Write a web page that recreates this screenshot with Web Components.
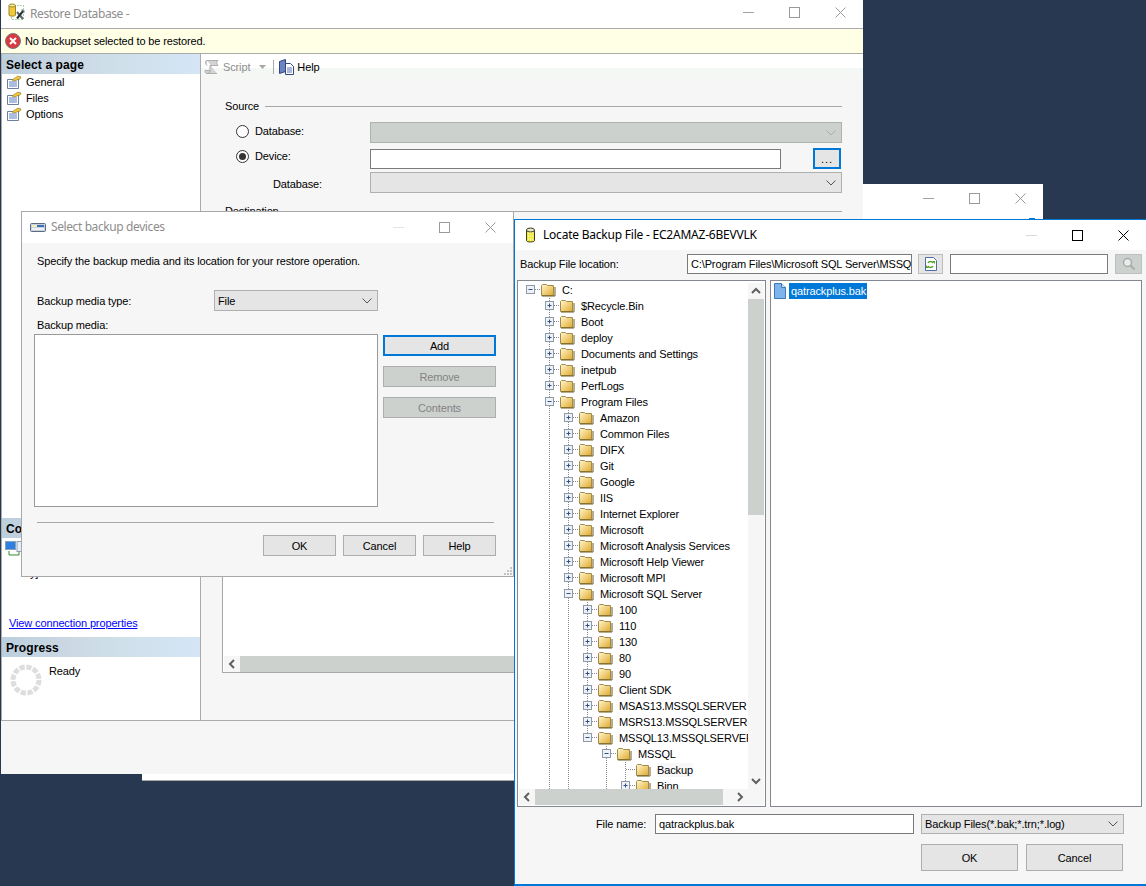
<!DOCTYPE html>
<html>
<head>
<meta charset="utf-8">
<title>Restore Database</title>
<style>
	html, body { margin: 0; height: 100%; overflow: hidden; }
	body { background: #283850; font: 11px "Liberation Sans", Arial, sans-serif; letter-spacing: -0.13px; color: #000; }
	#main { left: 1px; top: 0; width: 862px; height: 774px; }
	#back { left: 142px; top: 184px; width: 901px; height: 597px; }
	#select { left: 21px; top: 211px; width: 493px; height: 366px; }
	#locate { left: 514px; top: 219px; width: 632px; height: 667px; }
</style>
</head>
<body>
<win-frame id="back" caption="" tone="dim" cap="28" variant="plain"><back-tick></back-tick></win-frame>

<win-frame id="main" caption="Restore Database -" tone="dim" cap="24" variant="none">
	<svg slot="icon" width="20" height="20" viewBox="0 0 20 20">
		<rect x="3.500" y="3.500" width="12" height="14" fill="none" stroke="#63a84e" stroke-dasharray="1 2"/>
		<path d="M1 3.500h6.500v9.500c0 1.500-6.500 1.500-6.500 0z" fill="#f0c93a" stroke="#9a8426"/>
		<ellipse cx="4.200" cy="3.500" rx="3.200" ry="1.500" fill="#f8ea9a" stroke="#9a8426"/>
		<path d="M9 10l6 7" stroke="#5c666e" stroke-width="2"/>
		<path d="M15.500 8.500l-6.500 8" stroke="#2c3238" stroke-width="2"/>
		<path d="M13 8h3v3" fill="none" stroke="#8b959c"/>
	</svg>
	<restore-page></restore-page>
</win-frame>

<win-frame id="select" caption="Select backup devices" tone="dim" cap="31" variant="bordered">
	<svg slot="icon" width="16" height="16" viewBox="0 0 16 16">
		<rect x="0.500" y="3.500" width="15" height="8" rx="1" fill="#c6d2e2" stroke="#5d6b80"/>
		<rect x="2" y="5" width="5" height="2" fill="#f4f1b8"/>
		<rect x="7" y="5" width="7" height="2" fill="#3f6fb0"/>
		<rect x="2" y="8" width="12" height="2" fill="#eef1f5"/>
	</svg>
	<select-devices></select-devices>
</win-frame>

<win-frame id="locate" caption="Locate Backup File - EC2AMAZ-6BEVVLK" tone="active" cap="30" variant="focused">
	<svg slot="icon" width="16" height="16" viewBox="0 0 16 16">
		<path d="M3.500 3v10.500c0 2 8 2 8 0V3z" fill="#f2ea3e" stroke="#3b3b22"/>
		<ellipse cx="7.500" cy="3" rx="4" ry="2" fill="#e8e6c0" stroke="#3b3b22"/>
		<path d="M5 6h6M5 9h6M5 12h6" stroke="#fff" stroke-dasharray="1 1"/>
	</svg>
	<locate-file></locate-file>
</win-frame>

<script>
const baseStyle = `
	* { box-sizing: border-box; }
	svg { display: block; flex: none; }
`;

class WinFrame extends HTMLElement {
	connectedCallback() {
		let shadow = this.attachShadow({mode: "open"});
		let cap = this.getAttribute("cap") || "30";
		let tone = this.getAttribute("tone");
		let variant = this.getAttribute("variant");
		let caption = this.getAttribute("caption");
		let capColor = tone == "active" ? "#000" : "#8d8d8d";
		let minColor = tone == "active" ? "#d8d8d8" : (this.id == "select" ? "#e4e4e4" : "#a0a0a0");
		let iconColor = tone == "active" ? "#000" : "#9a9a9a";
		let border = "border: 1px solid #a8a8a8;";
		if (variant == "plain") border = "border-bottom: 1px solid #a8a8a8;";
		if (variant == "none") border = "";
		if (variant == "focused") border = "border: solid #0078d7; border-width: 1px 0 2px 1px;";
		shadow.innerHTML = `
			<style>
				${baseStyle}
				:host {
					position: absolute;
					display: flex;
					flex-direction: column;
					box-sizing: border-box;
					background: #fff;
					overflow: hidden;
					${border}
				}
				header {
					display: flex;
					align-items: center;
					flex: none;
					height: ${cap}px;
					background: #fff;
					padding-left: ${variant == "bordered" || variant == "focused" ? 8 : 7}px;
				}
				h1 {
					margin: 0 0 0 ${variant == "none" ? 2 : variant == "focused" ? 4 : 5}px;
					padding: ${variant == "none" ? "2px 0 0" : "0 0 2px"};
					flex: 1;
					font: 12px "Noto Sans", "Open Sans", sans-serif;
					letter-spacing: ${tone == "active" ? -0.22 : -0.4}px;
					color: ${capColor};
					white-space: nowrap;
				}
				.ctl {
					width: 46px;
					height: ${cap}px;
					display: flex;
					align-items: center;
					justify-content: center;
				}
				.body { flex: 1; display: flex; flex-direction: column; min-height: 0; position: relative; }
			</style>
			<header>
				<slot name="icon"></slot>
				<h1>${caption}</h1>
				<div class="ctl"><svg width="11" height="11" viewBox="0 0 11 11"><path d="M0 5.500h11" stroke="${minColor}"/></svg></div>
				<div class="ctl"><svg width="11" height="11" viewBox="0 0 11 11"><rect x="0.500" y="0.500" width="10" height="10" fill="none" stroke="${iconColor}"/></svg></div>
				<div class="ctl"><svg width="11" height="11" viewBox="0 0 11 11"><path d="M0.500 0.500l10 10M10.500 0.500l-10 10" stroke="${iconColor}" fill="none"/></svg></div>
			</header>
			<div class="body"><slot></slot></div>
		`;
	}
}
customElements.define("win-frame", WinFrame);

class BackTick extends HTMLElement {
	connectedCallback() {
		let shadow = this.attachShadow({mode: "open"});
		shadow.innerHTML = `
			<style>
				:host { position: absolute; right: 8px; top: 6px; width: 6px; height: 2px; background: #0078d7; display: block; }
			</style>
		`;
	}
}
customElements.define("back-tick", BackTick);

class WinBtn extends HTMLElement {
	connectedCallback() {
		let shadow = this.attachShadow({mode: "open"});
		let focus = this.hasAttribute("focus");
		let off = this.hasAttribute("disabled");
		shadow.innerHTML = `
			<style>
				${baseStyle}
				:host {
					display: flex;
					align-items: center;
					justify-content: center;
					flex: none;
					box-sizing: border-box;
					background: ${off ? "#cdd1ce" : "#e5e5e5"};
					color: ${off ? "#838383" : "#000"};
					border: ${focus ? "2px solid #0078d7" : "1px solid #adadad"};
				}
			</style>
			<slot></slot>
		`;
	}
}
customElements.define("win-btn", WinBtn);

class WinCombo extends HTMLElement {
	connectedCallback() {
		let shadow = this.attachShadow({mode: "open"});
		let off = this.hasAttribute("disabled");
		shadow.innerHTML = `
			<style>
				${baseStyle}
				:host {
					display: flex;
					align-items: center;
					box-sizing: border-box;
					background: ${off ? "#cdd1ce" : "#e5e5e5"};
					border: 1px solid #adb2af;
					padding: 0 5px 0 3px;
				}
				span { flex: 1; white-space: nowrap; }
			</style>
			<span><slot></slot></span>
			<svg width="10" height="6" viewBox="0 0 10 6"><path d="M0.500 0.500L5 5l4.500-4.500" fill="none" stroke="${off ? "#a9adaa" : "#555"}"/></svg>
		`;
	}
}
customElements.define("win-combo", WinCombo);

class WinInput extends HTMLElement {
	connectedCallback() {
		let shadow = this.attachShadow({mode: "open"});
		shadow.innerHTML = `
			<style>
				:host {
					display: flex;
					align-items: center;
					box-sizing: border-box;
					background: #fff;
					border: 1px solid #7a7a7a;
					padding: 0 2px 0 3px;
					overflow: hidden;
					white-space: nowrap;
				}
			</style>
			<slot></slot>
		`;
	}
}
customElements.define("win-input", WinInput);

class WinRadio extends HTMLElement {
	connectedCallback() {
		let shadow = this.attachShadow({mode: "open"});
		let on = this.hasAttribute("checked");
		shadow.innerHTML = `
			<style>
				${baseStyle}
				:host { display: flex; align-items: center; gap: 6px; }
			</style>
			<svg width="13" height="13" viewBox="0 0 13 13">
				<circle cx="6.500" cy="6.500" r="6" fill="#fff" stroke="#333"/>
				${on ? '<circle cx="6.500" cy="6.500" r="3.500" fill="#333"/>' : ""}
			</svg>
			<slot></slot>
		`;
	}
}
customElements.define("win-radio", WinRadio);

class SectionHead extends HTMLElement {
	connectedCallback() {
		let shadow = this.attachShadow({mode: "open"});
		shadow.innerHTML = `
			<style>
				:host {
					display: flex;
					align-items: center;
					flex: none;
					height: 20px;
					padding: 2px 0 0 4px;
					box-sizing: border-box;
					font-weight: bold;
					font-size: 12px;
					letter-spacing: 0.1px;
					background: linear-gradient(90deg, #bccfdd 0, #ccd8e4 35%, #cfe0ea 60%, #d5e5f5 100%);
				}
			</style>
			<slot></slot>
		`;
	}
}
customElements.define("section-head", SectionHead);

class GroupTitle extends HTMLElement {
	connectedCallback() {
		let shadow = this.attachShadow({mode: "open"});
		shadow.innerHTML = `
			<style>
				:host { display: flex; align-items: center; gap: 6px; height: 12px; }
				i { flex: 1; border-top: 1px solid #a8a8a8; }
			</style>
			<slot></slot><i></i>
		`;
	}
}
customElements.define("group-title", GroupTitle);

class ScrollBar extends HTMLElement {
	connectedCallback() {
		let shadow = this.attachShadow({mode: "open"});
		let vertical = this.getAttribute("orient") == "v";
		let size = this.getAttribute("thumb");
		let a = vertical ? "M1 7l4-4 4 4" : "M7 1L3 5l4 4";
		let b = vertical ? "M1 3l4 4 4-4" : "M3 1l4 4-4 4";
		shadow.innerHTML = `
			<style>
				${baseStyle}
				:host {
					display: flex;
					flex-direction: ${vertical ? "column" : "row"};
					flex: none;
					box-sizing: border-box;
					background: #f6f6f6;
					${vertical ? "width: 16px;" : "height: 16px;"}
				}
				.arrow { flex: none; width: 16px; height: 16px; display: flex; align-items: center; justify-content: center; }
				.thumb { flex: ${size ? "none" : 1}; background: #cdd1ce; ${vertical ? "height" : "width"}: ${size ? size + "px" : "auto"}; }
				.track { flex: 1; }
			</style>
			<div class="arrow"><svg width="10" height="10" viewBox="0 0 10 10"><path d="${a}" fill="none" stroke="#606060" stroke-width="2"/></svg></div>
			<div class="thumb"></div>
			${size ? '<div class="track"></div>' : ""}
			<div class="arrow"><svg width="10" height="10" viewBox="0 0 10 10"><path d="${b}" fill="none" stroke="#606060" stroke-width="2"/></svg></div>
		`;
	}
}
customElements.define("scroll-bar", ScrollBar);

const pageIcon = `<svg width="17" height="16" viewBox="0 0 17 16">
	<path d="M1.500 5.500h11v9h-11z" fill="#fff" stroke="#6b7f99"/>
	<path d="M3 8h8M3 10h8M3 12h8" stroke="#5a7ec0"/>
	<path d="M6 6l6-4 3 1-1 2-6 2z" fill="#f2c83a" stroke="#8a6d1a" stroke-width="0.600"/>
</svg>`;

class NavItem extends HTMLElement {
	connectedCallback() {
		let shadow = this.attachShadow({mode: "open"});
		shadow.innerHTML = `
			<style>
				${baseStyle}
				:host { display: flex; align-items: center; gap: 3px; height: 16px; padding-left: 4px; }
			</style>
			${pageIcon}
			<slot></slot>
		`;
	}
}
customElements.define("nav-item", NavItem);

class RestorePage extends HTMLElement {
	connectedCallback() {
		let shadow = this.attachShadow({mode: "open"});
		shadow.innerHTML = `
			<style>
				${baseStyle}
				:host { display: flex; flex-direction: column; flex: 1; min-height: 0; background: #fff; padding-top: 4px; height: 100%; }
				.msg {
					display: flex;
					align-items: center;
					gap: 4px;
					flex: none;
					height: 26px;
					padding-left: 4px;
					background: #ffffe6;
					border-top: 1px solid #ababab;
					border-bottom: 1px solid #ababab;
				}
				.split { flex: 1; display: grid; grid-template-columns: 199px 1fr; min-height: 0; border-left: 1px solid #ababab; }
				.side { display: flex; flex-direction: column; border-right: 1px solid #ababab; background: #fff; }
				.pages { display: flex; flex-direction: column; height: 464px; }
				.conn { display: flex; flex-direction: column; flex: none; height: 119px; }
				.conn-ico { padding: 3px 0 0 3px; height: 24px; }
				.conn-txt { padding: 5px 0 0 28px; height: 36px; }
				a { color: #0000ff; text-decoration: underline; padding: 19px 0 0 7px; }
				.prog { display: flex; gap: 7px; padding: 7px 0 0 8px; }
				.prog span { padding-top: 1px; }
				.main { display: flex; flex-direction: column; background: #f6f6f6; }
				.tools {
					display: flex;
					align-items: center;
					gap: 3px;
					height: 24px;
					padding: 2px 0 0 2px;
					flex: none;
					background: linear-gradient(#fff 0 14px, #f4f8f4 14px, #f6f6f6 34px);
				}
				.gray { color: #8d8d8d; }
				.dd { margin: 0 4px 0 6px; }
				.sep { width: 1px; height: 14px; background: #a9a9a9; margin-right: 1px; }
				.help { margin-left: -1px; }
				.form {
					flex: none;
					display: grid;
					grid-template-columns: 145px 1fr;
					row-gap: 5px;
					padding: 22px 21px 0 24px;
					background: #f6f6f6;
				}
				group-title { grid-column: 1 / 3; }
				.first { margin-bottom: 5px; }
				.radio { padding-left: 11px; align-self: start; }
				.sub { padding: 6px 0 0 48px; margin-top: -2px; }
				.device { display: flex; gap: 32px; padding-right: 1px; }
				.device win-input { flex: 1; height: 20px; margin: 1px 0 0; }
				.device win-btn { width: 28px; height: 21px; letter-spacing: 1px; }
				.box {
					flex: 1;
					display: flex;
					flex-direction: column;
					justify-content: flex-end;
					margin: 12px 21px 47px 21px;
					background: #fff;
					border: 1px solid #a8a8a8;
				}
				.box scroll-bar { margin-left: 1px; }
				.foot { height: 54px; flex: none; background: #f6f6f6; border-top: 1px solid #ababab; }
			</style>
			<div class="msg">
				<svg width="16" height="16" viewBox="0 0 16 16">
					<circle cx="8" cy="8" r="7.500" fill="#d93a42" stroke="#77777b"/>
					<path d="M5 5l6 6M11 5l-6 6" stroke="#fff" stroke-width="2"/>
				</svg>
				<span>No backupset selected to be restored.</span>
			</div>
			<div class="split">
				<div class="side">
					<div class="pages">
						<section-head>Select a page</section-head>
						<nav-item>General</nav-item>
						<nav-item>Files</nav-item>
						<nav-item>Options</nav-item>
					</div>
					<div class="conn">
						<section-head>Connection</section-head>
						<div class="conn-ico">
							<svg width="20" height="16" viewBox="0 0 20 16">
								<rect x="0.500" y="0.500" width="10" height="8" fill="#2f7fe0" stroke="#8aa0b8"/>
								<rect x="12" y="0.500" width="6" height="10" fill="#e6ecf4" stroke="#8aa0b8"/>
								<path d="M4 10v4h10v-3" fill="none" stroke="#2f8f2f"/>
							</svg>
						</div>
						<div class="conn-txt">y]</div>
						<a>View connection properties</a>
					</div>
					<section-head>Progress</section-head>
					<div class="prog">
						<svg width="32" height="32" viewBox="0 0 32 32"><circle cx="16" cy="16" r="13" fill="none" stroke="#dedede" stroke-width="5" stroke-dasharray="5.200 1.600"/></svg>
						<span>Ready</span>
					</div>
				</div>
				<div class="main">
					<div class="tools">
						<svg width="17" height="16" viewBox="0 0 17 16">
							<path d="M4 1.500h11c-2 2-1 3 0 5H7v5c0 2-1 3-3 3h10" fill="#d4d4d4" stroke="#adadad"/>
							<path d="M2 11.500h5c0 1.500-1 3-3 3s-2-2-2-3zM4 1.500c-2 0-2 3 0 5" fill="#d4d4d4" stroke="#adadad"/>
						</svg>
						<span class="gray">Script</span>
						<svg class="dd" width="7" height="4" viewBox="0 0 7 4"><path d="M0 0h7L3.500 4z" fill="#a8a8a8"/></svg>
						<div class="sep"></div>
						<svg width="17" height="17" viewBox="0 0 17 17">
							<path d="M1.500 2.500l6-2v12l-6 2z" fill="#6c83c4" stroke="#33447e"/>
							<path d="M7.500 4.500h5l3 3v8h-8z" fill="#fff" stroke="#33447e"/>
							<path d="M9 9h5M9 11h5M9 13h5" stroke="#5a6fb0"/>
						</svg>
						<span class="help">Help</span>
					</div>
					<div class="form">
						<group-title class="first">Source</group-title>
						<win-radio class="radio" style="height:18px">Database:</win-radio>
						<win-combo disabled style="height:21px"></win-combo>
						<win-radio class="radio" style="height:16px" checked>Device:</win-radio>
						<div class="device"><win-input></win-input><win-btn focus>...</win-btn></div>
						<div class="sub">Database:</div>
						<win-combo style="height:21px;margin-top:-2px"></win-combo>
					</div>
					<div class="form" style="padding-top:12px"><group-title>Destination</group-title></div>
					<div class="box"><scroll-bar orient="h"></scroll-bar></div>
				</div>
			</div>
			<div class="foot"></div>
		`;
	}
}
customElements.define("restore-page", RestorePage);

class SelectDevices extends HTMLElement {
	connectedCallback() {
		let shadow = this.attachShadow({mode: "open"});
		shadow.innerHTML = `
			<style>
				${baseStyle}
				:host { display: flex; flex-direction: column; flex: 1; height: 100%; background: #f6f6f6; position: relative; padding: 12px 17px 0 15px; }
				.type { display: grid; grid-template-columns: 177px 164px; align-items: center; margin-top: 23px; }
				.type win-combo { height: 21px; }
				.lbl { margin: 8px 0 1px; height: 14px; }
				.media { display: flex; gap: 5px; margin-left: -3px; }
				.list { width: 344px; height: 173px; background: #fff; border: 1px solid #9a9a9a; }
				.btns { display: flex; flex-direction: column; gap: 10px; padding-top: 1px; }
				.btns win-btn { width: 113px; height: 21px; }
				hr { margin: 15px 2px 0 0; border: 0; border-top: 1px solid #a8a8a8; }
				.foot { display: flex; justify-content: flex-end; gap: 7px; margin-top: 12px; }
				.foot win-btn { height: 21px; width: 73px; }
				.grip { position: absolute; right: 1px; bottom: 1px; }
			</style>
			<div>Specify the backup media and its location for your restore operation.</div>
			<div class="type"><span>Backup media type:</span><win-combo>File</win-combo></div>
			<div class="lbl">Backup media:</div>
			<div class="media">
				<div class="list"></div>
				<div class="btns">
					<win-btn focus>Add</win-btn>
					<win-btn disabled>Remove</win-btn>
					<win-btn disabled>Contents</win-btn>
				</div>
			</div>
			<hr>
			<div class="foot"><win-btn>OK</win-btn><win-btn>Cancel</win-btn><win-btn>Help</win-btn></div>
			<svg class="grip" width="9" height="9" viewBox="0 0 9 9"><path d="M7 1h2v2H7zM4 4h2v2H4zM7 4h2v2H7zM1 7h2v2H1zM4 7h2v2H4zM7 7h2v2H7z" fill="#c4c4c4"/></svg>
		`;
	}
}
customElements.define("select-devices", SelectDevices);

const treeRows = [
	[0, "C:", "-"], [1, "$Recycle.Bin", "+"], [1, "Boot", "+"], [1, "deploy", "+"],
	[1, "Documents and Settings", "+"], [1, "inetpub", "+"], [1, "PerfLogs", "+"], [1, "Program Files", "-"],
	[2, "Amazon", "+"], [2, "Common Files", "+"], [2, "DIFX", "+"], [2, "Git", "+"], [2, "Google", "+"],
	[2, "IIS", "+"], [2, "Internet Explorer", "+"], [2, "Microsoft", "+"], [2, "Microsoft Analysis Services", "+"],
	[2, "Microsoft Help Viewer", "+"], [2, "Microsoft MPI", "+"], [2, "Microsoft SQL Server", "-"],
	[3, "100", "+"], [3, "110", "+"], [3, "130", "+"], [3, "80", "+"], [3, "90", "+"], [3, "Client SDK", "+"],
	[3, "MSAS13.MSSQLSERVER", "+"], [3, "MSRS13.MSSQLSERVER", "+"], [3, "MSSQL13.MSSQLSERVER", "-"],
	[4, "MSSQL", "-"], [5, "Backup", ""], [5, "Binn", "+"]
];
// levels which carry on below the part of the tree that is on screen
const openLevels = [1, 2, 4];

function continues(i, level) {
	for (let j = i + 1; j < treeRows.length; j++) {
		if (treeRows[j][0] == level) return true;
		if (treeRows[j][0] < level) return false;
	}
	return openLevels.includes(level);
}

function treeCell(top, bottom, right, state) {
	let dots = 'stroke="#8a8a8a" stroke-dasharray="1 1" fill="none"';
	let s = `<svg width="19" height="16" viewBox="0 0 19 16">`;
	if (top) s += `<path d="M9.500 0v8" ${dots}/>`;
	if (bottom) s += `<path d="M9.500 8v8" ${dots}/>`;
	if (right) s += `<path d="M10 7.500h9" ${dots}/>`;
	if (state) {
		s += `<rect x="5.500" y="3.500" width="8" height="8" fill="#eef1f5" stroke="#8e9aa8"/>`;
		s += `<path d="M7.500 7.500h4" stroke="#33508a"/>`;
		if (state == "+") s += `<path d="M9.500 5.500v4" stroke="#33508a"/>`;
	}
	return s + `</svg>`;
}

const folderIcon = `<svg width="16" height="14" viewBox="0 0 16 14">
	<defs><linearGradient id="fg" x1="0" y1="0" x2="1" y2="1"><stop offset="0" stop-color="#fff8d0"/><stop offset="1" stop-color="#e2a92a"/></linearGradient></defs>
	<path d="M1.500 2.500l1-1h4l1 1h6v10h-12z" fill="url(#fg)" stroke="#a08a4c"/>
	<path d="M2 13h13V4" fill="none" stroke="#6e5a20"/>
</svg>`;

class FileTree extends HTMLElement {
	connectedCallback() {
		let shadow = this.attachShadow({mode: "open"});
		let rows = "";
		treeRows.forEach((r, i) => {
			let level = r[0];
			let cells = "";
			for (let k = 0; k < level; k++) {
				cells += treeCell(continues(i, k) && k > 0, continues(i, k) && k > 0, false, "");
			}
			cells += treeCell(level > 0, level > 0 && continues(i, level), true, r[2]);
			rows += `<div class="row">${cells}${folderIcon}<span class="${r[1] == "Backup" ? "hi" : ""}">${r[1]}</span></div>`;
		});
		shadow.innerHTML = `
			<style>
				${baseStyle}
				:host {
					display: grid;
					grid-template-columns: 1fr 16px;
					grid-template-rows: 1fr 16px;
					box-sizing: border-box;
					background: #fff;
					border: 1px solid #828790;
					padding: 2px 1px 1px 0;
					overflow: hidden;
				}
				.rows { padding: 0 0 0 3px; margin-top: -1px; overflow: hidden; min-height: 0; }
				.row { display: flex; align-items: center; height: 16px; white-space: nowrap; }
				.row span { margin-left: 6px; padding: 1px 0; }
				.hi { background: #f8f8f8; }
				.corner { background: #f6f6f6; }
				scroll-bar[orient=h] { margin-left: 1px; }
			</style>
			<div class="rows">${rows}</div>
			<scroll-bar orient="v" thumb="216"></scroll-bar>
			<scroll-bar orient="h" thumb="188"></scroll-bar>
			<div class="corner"></div>
		`;
	}
}
customElements.define("file-tree", FileTree);

class LocateFile extends HTMLElement {
	connectedCallback() {
		let shadow = this.attachShadow({mode: "open"});
		shadow.innerHTML = `
			<style>
				${baseStyle}
				:host { display: flex; flex-direction: column; height: 100%; background: #f6f6f6; padding: 4px 4px 0 2px; }
				.top { display: flex; align-items: center; height: 20px; flex: none; }
				.top span { width: 170px; padding-left: 3px; }
				.path { width: 225px; height: 20px; }
				.refresh { width: 25px; height: 20px; margin-left: 6px; background: #e5e5e5; border: 1px solid #bdbdbd; display: flex; align-items: center; justify-content: center; }
				.find { width: 158px; height: 20px; margin-left: 7px; }
				.go { width: 27px; height: 20px; margin-left: 7px; background: #cdd1ce; border: 1px solid #bdc0be; display: flex; align-items: center; justify-content: center; }
				.panes { display: grid; grid-template-columns: 249px 1fr; gap: 4px; flex: none; height: 527px; margin-top: 6px; }
				.list { background: #fff; border: 1px solid #828790; padding: 2px 3px; }
				.item { display: flex; align-items: center; gap: 3px; }
				.item span { background: #0078d7; color: #fff; height: 16px; padding: 0 1px 0 2px; display: flex; align-items: center; }
				.name { display: flex; align-items: center; margin-top: 7px; height: 20px; padding-left: 79px; }
				.name span { width: 59px; }
				.name win-input { width: 259px; height: 20px; }
				.name win-combo { width: 203px; height: 20px; margin-left: 7px; }
				.foot { display: flex; justify-content: flex-end; gap: 8px; padding-right: 19px; margin-top: 10px; }
				.foot win-btn { width: 97px; height: 27px; }
			</style>
			<div class="top">
				<span>Backup File location:</span>
				<win-input class="path">C:\\Program Files\\Microsoft SQL Server\\MSSQL13.MSSQLSERVER</win-input>
				<div class="refresh">
					<svg width="14" height="16" viewBox="0 0 14 16">
						<path d="M1.500 1.500h8l3 3v10h-11z" fill="#fff" stroke="#4c6fa5"/>
						<path d="M4 7c1-2 4-2 5 0M9 10c-1 2-4 2-5 0" fill="none" stroke="#5aa028" stroke-width="1.500"/>
						<path d="M8 5h3v3zM5 12H2V9z" fill="#5aa028"/>
					</svg>
				</div>
				<win-input class="find"></win-input>
				<div class="go">
					<svg width="16" height="16" viewBox="0 0 16 16">
						<circle cx="6.500" cy="6.500" r="4" fill="#e8ecec" stroke="#a6abab" stroke-width="1.500"/>
						<path d="M9.500 9.500l4 4" stroke="#a6abab" stroke-width="2"/>
					</svg>
				</div>
			</div>
			<div class="panes">
				<file-tree></file-tree>
				<div class="list">
					<div class="item">
						<svg width="12" height="16" viewBox="0 0 12 16">
							<path d="M0.500 0.500h7l4 4v11h-11z" fill="#7db4ea" stroke="#3f78b8"/>
							<path d="M7.500 0.500v4h4" fill="#d6e8fa" stroke="#3f78b8"/>
						</svg>
						<span>qatrackplus.bak</span>
					</div>
				</div>
			</div>
			<div class="name">
				<span>File name:</span>
				<win-input>qatrackplus.bak</win-input>
				<win-combo>Backup Files(*.bak;*.trn;*.log)</win-combo>
			</div>
			<div class="foot"><win-btn>OK</win-btn><win-btn>Cancel</win-btn></div>
		`;
	}
}
customElements.define("locate-file", LocateFile);
</script>
</body>
</html>
